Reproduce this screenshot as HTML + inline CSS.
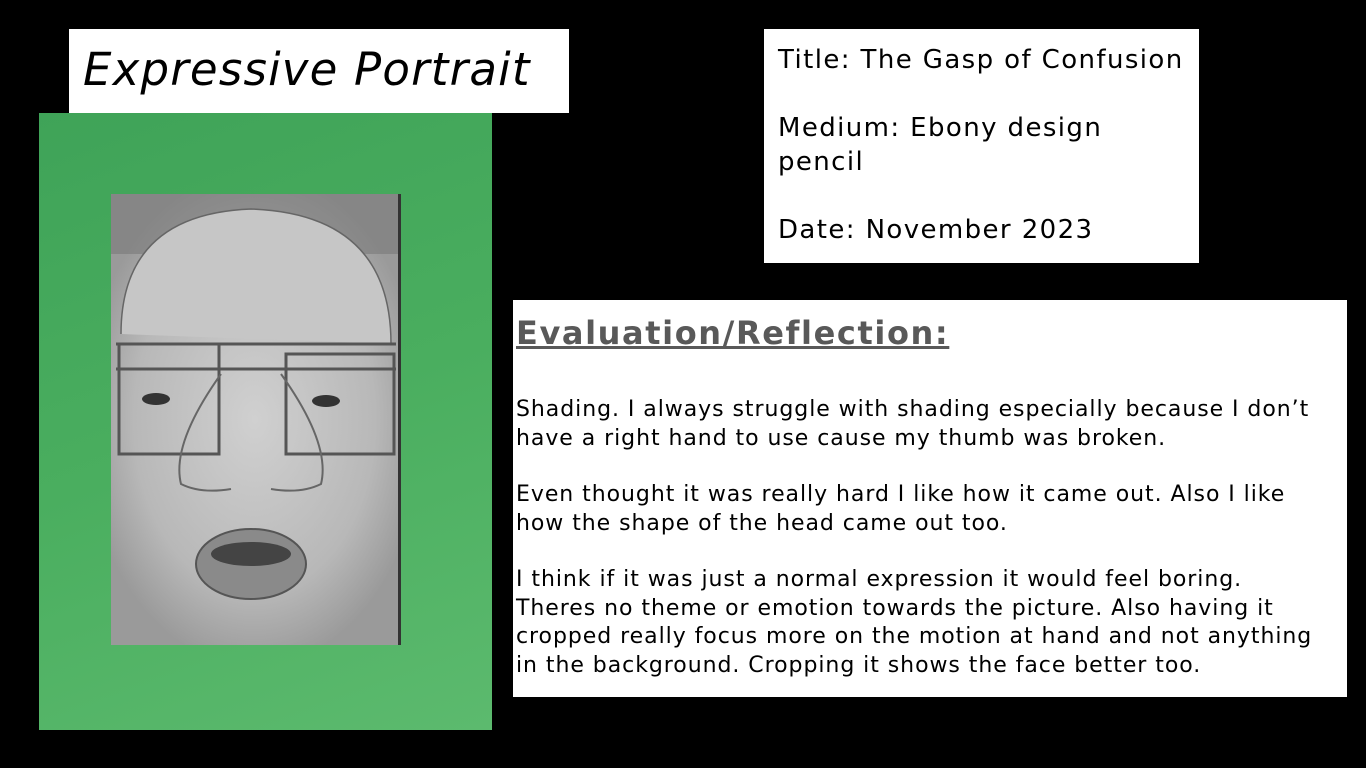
<!DOCTYPE html>
<html><head><meta charset="utf-8"><style>
body{margin:0;width:1366px;height:768px;background:#000;position:relative;overflow:hidden;font-family:"DejaVu Sans","Liberation Sans",sans-serif;}
.box{position:absolute;background:#fff;}
#t{left:69px;top:29px;width:500px;height:84px;}
#t span{position:absolute;left:14px;top:14px;font-size:45px;letter-spacing:1.2px;font-style:italic;font-family:"DejaVu Sans",sans-serif;color:#000;white-space:nowrap;}
#info{left:764px;top:29px;width:435px;height:234px;}
#info div{position:absolute;left:14px;font-size:26px;letter-spacing:1.4px;line-height:34px;color:#000;white-space:nowrap;}
#ev{left:513px;top:300px;width:834px;height:397px;}
#ev h{position:absolute;left:3px;top:14px;font-size:32px;letter-spacing:1.6px;font-weight:bold;color:#595959;text-decoration:underline;white-space:nowrap;}
#ev p{position:absolute;left:3px;margin:0;font-size:22px;letter-spacing:0.95px;line-height:28.5px;color:#000;white-space:nowrap;}
#green{position:absolute;left:39px;top:113px;width:453px;height:617px;background:linear-gradient(160deg,#3fa358,#4aae5f 50%,#5cba6e);}
#paper{position:absolute;left:111px;top:194px;width:287px;height:451px;background:radial-gradient(ellipse 60% 55% at 50% 50%,#d0d0d0,#b8b8b8 70%,#9a9a9a);border-right:3px solid #333;}
</style></head><body>
<div class="box" id="t"><span>Expressive Portrait</span></div>
<div class="box" id="info">
<div style="top:14px">Title: The Gasp of Confusion</div>
<div style="top:82px">Medium: Ebony design</div>
<div style="top:116px">pencil</div>
<div style="top:184px">Date: November 2023</div>
</div>
<div id="green"></div>
<div id="paper">
<svg width="287" height="451" viewBox="0 0 287 451" style="position:absolute;left:0;top:0">
<rect x="0" y="0" width="287" height="60" fill="#7a7a7a" opacity="0.6"/>
<path d="M10 140 Q10 20 140 15 Q280 20 280 150" fill="#c6c6c6" stroke="#666" stroke-width="1.5"/>
<path d="M5 150 H285 M5 175 H285" stroke="#555" stroke-width="3" fill="none"/>
<rect x="8" y="150" width="100" height="110" fill="none" stroke="#555" stroke-width="3"/>
<rect x="175" y="160" width="108" height="100" fill="none" stroke="#555" stroke-width="3"/>
<ellipse cx="45" cy="205" rx="14" ry="6" fill="#333"/>
<ellipse cx="215" cy="207" rx="14" ry="6" fill="#333"/>
<path d="M110 180 Q60 250 70 290 Q90 300 120 295 M170 180 Q220 250 210 290 Q190 300 160 295" stroke="#666" fill="none" stroke-width="2"/>
<ellipse cx="140" cy="370" rx="55" ry="35" fill="#8a8a8a" stroke="#555" stroke-width="2"/>
<ellipse cx="140" cy="360" rx="40" ry="12" fill="#444"/>
</svg>
</div>
<div class="box" id="ev">
<h>Evaluation/Reflection:</h>
<p style="top:96px">Shading. I always struggle with shading especially because I don’t<br>have a right hand to use cause my thumb was broken.</p>
<p style="top:181px">Even thought it was really hard I like how it came out. Also I like<br>how the shape of the head came out too.</p>
<p style="top:266px">I think if it was just a normal expression it would feel boring.<br>Theres no theme or emotion towards the picture. Also having it<br>cropped really focus more on the motion at hand and not anything<br>in the background. Cropping it shows the face better too.</p>
</div>
</body></html>
